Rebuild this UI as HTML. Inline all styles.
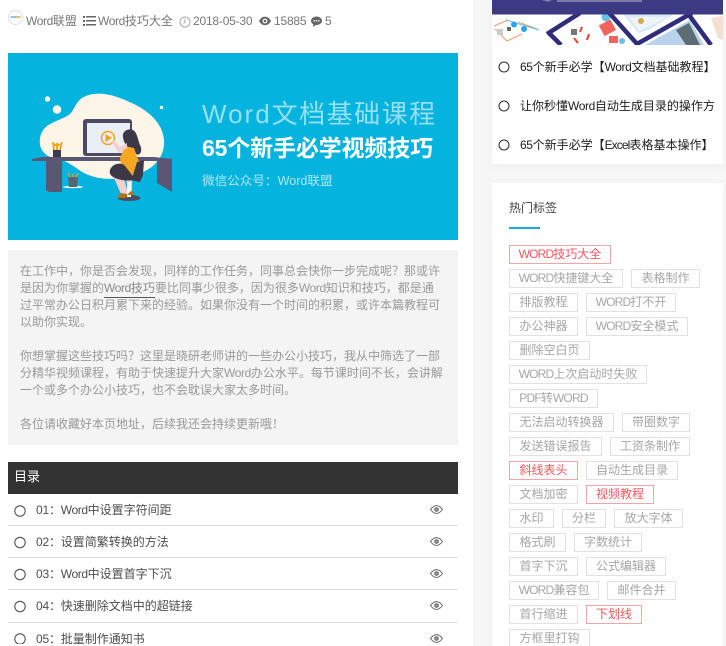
<!DOCTYPE html>
<html lang="zh">
<head>
<meta charset="utf-8">
<style>
*{box-sizing:border-box;margin:0;padding:0}
html,body{width:726px;height:646px;overflow:hidden;background:#f7f7f7}
body{position:relative;font-family:"Liberation Sans","Noto Sans CJK SC",sans-serif;font-size:12px}
.a{position:absolute;white-space:nowrap}
#left{position:absolute;left:0;top:0;width:473px;height:646px;background:#fff}
i{font-style:normal}
.m{color:#777;line-height:16px;top:13px}
.m i{letter-spacing:-.4px}
.p{left:20px;color:#999;line-height:17px;width:430px}
.p i{letter-spacing:-.4px}
.toc{left:36px;color:#4d4d4d;line-height:16px}
.toc i{letter-spacing:-.4px}
.toc u{text-decoration:none;letter-spacing:-.2px}
.ln{position:absolute;left:8px;width:450px;height:1px;background:#ddd}
.card{position:absolute;left:492px;width:231px;background:#fff;box-shadow:0 3px 10px rgba(0,0,0,.035)}
.s{left:520px;color:#1c1c1c;line-height:16px;width:195px;overflow:hidden}
.s i{letter-spacing:-.4px}
.t{position:absolute;height:19px;border:1px solid #e2e2e2;color:#a6a6a6;line-height:16px;text-align:center;white-space:nowrap;overflow:hidden}
.t i{letter-spacing:-.8px}
.r{border-color:#f5a5a8;color:#f9565c}
svg{position:absolute;display:block}
</style>
</head>
<body>
<div id="left"></div>

<!-- meta -->
<svg style="left:8px;top:10px" width="15" height="15" viewBox="0 0 15 15"><circle cx="7.5" cy="7.5" r="7" fill="#fff" stroke="#ddd"/><rect x="2.5" y="6" width="6" height="2" fill="#8cc8e8"/><rect x="8.5" y="6" width="4" height="2" fill="#f3c06a"/></svg>
<div class="a m" style="left:26px"><i>Word</i>联盟</div>
<svg style="left:83px;top:15px" width="13" height="12" viewBox="0 0 13 12" fill="#666"><rect x="0" y="1" width="2" height="2"/><rect x="3" y="1" width="10" height="1.5"/><rect x="0" y="5" width="2" height="2"/><rect x="3" y="5" width="10" height="1.5"/><rect x="0" y="9" width="2" height="2"/><rect x="3" y="9" width="10" height="1.5"/></svg>
<div class="a m" style="left:98px"><i>Word</i>技巧大全</div>
<svg style="left:179px;top:16px" width="12" height="12" viewBox="0 0 12 12" fill="none" stroke="#aaa"><circle cx="6" cy="6" r="5"/><path d="M6 2.8V6L4.6 7.6"/></svg>
<div class="a m" style="left:193px;letter-spacing:-.2px">2018-05-30</div>
<svg style="left:259px;top:16px" width="12" height="10" viewBox="0 0 12 10"><path d="M0 5C2 1.5 4 .8 6 .8S10 1.5 12 5C10 8.5 8 9.2 6 9.2S2 8.5 0 5Z" fill="#666"/><circle cx="6" cy="5" r="2.4" fill="#fff"/><circle cx="6" cy="5" r="1.3" fill="#666"/></svg>
<div class="a m" style="left:274px;letter-spacing:-.2px">15885</div>
<svg style="left:311px;top:16px" width="11" height="11" viewBox="0 0 11 11"><path d="M5.5 .5C8.5 .5 11 2.300 11 4.800S8.500 9 5.500 9L4.800 9 2 11 2.300 8.300C.9 7.500 0 6.300 0 4.800 0 2.300 2.500 .5 5.500 .5Z" fill="#666"/><circle cx="3.200" cy="4.800" r=".8" fill="#fff"/><circle cx="5.500" cy="4.800" r=".8" fill="#fff"/><circle cx="7.800" cy="4.800" r=".8" fill="#fff"/></svg>
<div class="a m" style="left:325px">5</div>

<!-- banner -->
<div class="a" style="left:8px;top:53px;width:450px;height:187px;background:#05b3df"></div>
<svg style="left:30px;top:90px" width="145" height="112" viewBox="0 0 145 112">
<path d="M52 8C64 1 78 3 95 10C115 18 132 30 134 50C135 65 126 78 108 84C90 90 72 91 56 84C46 79 38 70 24 68C10 65 7 52 12 42C17 32 33 30 40 24C44 20 46 12 52 8Z" fill="#fdf5e8"/>
<circle cx="17.500" cy="9" r="2.700" fill="#fdf5e8"/><circle cx="27" cy="19.500" r="4.300" fill="#fdf5e8"/><circle cx="131.500" cy="17.500" r="1.700" fill="#fdf5e8"/>
<rect x="53" y="29" width="49" height="37" rx="3" fill="#4d4a62"/><rect x="57" y="33" width="43" height="30" fill="#eaeef6"/>
<circle cx="78" cy="48" r="6.500" fill="none" stroke="#f6a11b" stroke-width="1.500"/><path d="M75.500 44V52L82 48Z" fill="#f6a11b"/>
<path d="M2 69L12 67H124L142 69V71H2Z" fill="#5a5775"/>
<path d="M16 71H32V102H19L16 100Z" fill="#5a5775"/>
<path d="M127 71H142V102L127 93Z" fill="#5a5775"/>
<rect x="23" y="60" width="8" height="7" fill="#3d3a4d"/><path d="M24 60L23 52M27 60V53M30 60L32 52M27 56L24 54M27 56L30 54" stroke="#f6a11b" stroke-width="1.800" fill="none"/>
<ellipse cx="43" cy="97" rx="10" ry="1.300" fill="#e8f5f8"/><path d="M38 87H48L47 97H39Z" fill="#5c6472"/><path d="M40 87L38 83M43 87V84M46 87L48 83" stroke="#f6a11b" stroke-width="1.300"/>
<path d="M84 88L94 88L98 104H91ZM96 88L102 88L102 102L98 102Z" fill="#f8cdd0"/>
<ellipse cx="99" cy="108" rx="11.500" ry="3" fill="#4d4a62"/><rect x="97" y="92" width="4" height="15" fill="#fdf5e8"/>
<path d="M87 108L91 103L97 104L96 108ZM97 105L101 101L104 102L103 105Z" fill="#b07414"/>
<path d="M93 47C92 41 98 38 103 40C107 42 108 50 110 55C113 60 110 68 105 63C98 57 94 55 93 47Z" fill="#3d3848"/>
<path d="M95 56L104 58L109 72L103 85L92 80L90 68Z" fill="#f6a722"/>
<path d="M97 58L89 63L82 53L84 50L90 57L97 53Z" fill="#f8cdd0"/>
<path d="M80 80C82 74 90 72 94 75C98 79 102 86 106 89C98 92 90 90 85 88C81 86 79 84 80 80Z" fill="#3d3848"/>
<path d="M114 70L113 85L110 92L100 90L103 85L107 72Z" fill="#3d3848"/>
</svg>
<div class="a" style="left:202px;top:97px;font-size:26px;line-height:34px;color:#fff;opacity:.58;letter-spacing:1.500px;font-weight:400"><i style="letter-spacing:2px">Word</i>文档基础课程</div>
<div class="a" style="left:202px;top:132px;font-size:23px;line-height:32px;color:#fff;font-weight:700;letter-spacing:-.15px">65个新手必学视频技巧</div>
<div class="a" style="left:202px;top:172px;font-size:12.600px;line-height:18px;color:#fff;opacity:.68">微信公众号：Word联盟</div>

<!-- intro -->
<div class="a" style="left:8px;top:250px;width:450px;height:195px;background:#f4f4f4"></div>
<div class="a p" style="top:263px">在工作中，你是否会发现，同样的工作任务，同事总会快你一步完成呢？那或许</div>
<div class="a p" style="top:280px">是因为你掌握的<i style="color:#888">Word</i><span style="color:#888">技巧</span>要比同事少很多，因为很多<i>Word</i>知识和技巧，都是通</div>
<div class="a" style="left:104px;top:297px;width:51px;height:1px;background:#555"></div>
<div class="a p" style="top:297px">过平常办公日积月累下来的经验。如果你没有一个时间的积累，或许本篇教程可</div>
<div class="a p" style="top:314px">以助你实现。</div>
<div class="a p" style="top:348px">你想掌握这些技巧吗？这里是晓研老师讲的一些办公小技巧，我从中筛选了一部</div>
<div class="a p" style="top:365px">分精华视频课程，有助于快速提升大家<i>Word</i>办公水平。每节课时间不长，会讲解</div>
<div class="a p" style="top:382px">一个或多个办公小技巧，也不会耽误大家太多时间。</div>
<div class="a p" style="top:416px">各位请收藏好本页地址，后续我还会持续更新哦！</div>

<!-- toc -->
<div class="a" style="left:8px;top:462px;width:450px;height:32px;background:#333;color:#fff;font-size:13px;line-height:30px;padding-left:6px">目录</div>
<svg style="left:14px;top:504px" width="12" height="140" viewBox="0 0 12 140" fill="none" stroke="#555" stroke-width="1.100"><circle cx="6" cy="7" r="5.200"/><circle cx="6" cy="38.500" r="5.200"/><circle cx="6" cy="70.500" r="5.200"/><circle cx="6" cy="102.500" r="5.200"/><circle cx="6" cy="135" r="5.200"/></svg>
<div class="a toc" style="top:502px"><u>01：</u><i>Word</i>中设置字符间距</div>
<div class="a toc" style="top:534px"><u>02：</u>设置简繁转换的方法</div>
<div class="a toc" style="top:566px"><u>03：</u><i>Word</i>中设置首字下沉</div>
<div class="a toc" style="top:598px"><u>04：</u>快速删除文档中的超链接</div>
<div class="a toc" style="top:631px"><u>05：</u>批量制作通知书</div>
<div class="ln" style="top:525px"></div><div class="ln" style="top:557px"></div><div class="ln" style="top:589px"></div><div class="ln" style="top:622px"></div>
<svg style="left:430px;top:505px" width="13" height="138" viewBox="0 0 13 138" fill="none" stroke="#666">
<g><path d="M.5 4.500C3 1.200 5 .6 6.500 .6S10 1.200 12.500 4.500C10 7.800 8 8.400 6.500 8.400S3 7.800 .5 4.500Z"/><circle cx="6.500" cy="4.500" r="1.800" fill="#999"/></g>
<g transform="translate(0,32)"><path d="M.5 4.500C3 1.200 5 .6 6.500 .6S10 1.200 12.500 4.500C10 7.800 8 8.400 6.500 8.400S3 7.800 .5 4.500Z"/><circle cx="6.500" cy="4.500" r="1.800" fill="#999"/></g>
<g transform="translate(0,64)"><path d="M.5 4.500C3 1.200 5 .6 6.500 .6S10 1.200 12.500 4.500C10 7.800 8 8.400 6.500 8.400S3 7.800 .5 4.500Z"/><circle cx="6.500" cy="4.500" r="1.800" fill="#999"/></g>
<g transform="translate(0,96)"><path d="M.5 4.500C3 1.200 5 .6 6.500 .6S10 1.200 12.500 4.500C10 7.800 8 8.400 6.500 8.400S3 7.800 .5 4.500Z"/><circle cx="6.500" cy="4.500" r="1.800" fill="#999"/></g>
<g transform="translate(0,129)"><path d="M.5 4.500C3 1.200 5 .6 6.500 .6S10 1.200 12.500 4.500C10 7.800 8 8.400 6.500 8.400S3 7.800 .5 4.500Z"/><circle cx="6.500" cy="4.500" r="1.800" fill="#999"/></g>
</svg>

<!-- sidebar card 1 -->
<div class="card" style="top:0;height:164px"></div>
<svg style="left:492px;top:0" width="231" height="45" viewBox="0 0 231 45">
<rect width="231" height="45" fill="#fff"/>
<path d="M131 14H182L157 30 146 33Z" fill="#d9e9f7"/>
<path d="M137 17H176L152 29 147 31Z" fill="#eef4fa"/>
<path d="M153 45L198 20 212 45Z" fill="#b9d3ec"/>
<path d="M184 30L197 23 208 45H194Z" fill="#5d6d72"/>
<circle cx="149" cy="21" r="3" fill="#d9a84a"/>
<path d="M2 26L16 20M3 29L15 41M15 41L30 34M26 22L45 29" stroke="#ef9a6d" stroke-width="1" fill="none"/>
<path d="M14 20L47 30" stroke="#5bbdea" stroke-width="1"/>
<circle cx="22" cy="24.500" r="3" fill="#2ba6e8"/><circle cx="32" cy="29" r="3" fill="#2ba6e8"/>
<rect x="5" y="29" width="6" height="6" fill="#ccc"/><rect x="15" y="27" width="4" height="4" fill="#666"/>
<rect x="109" y="22" width="13" height="12" fill="#f0655c" transform="rotate(-28 115 28)"/>
<circle cx="114" cy="17" r="4.500" fill="#66c1e8"/><rect x="117" y="36" width="9" height="7" fill="#f0655c"/><circle cx="130" cy="41" r="3" fill="#66c1e8"/>
<rect x="79" y="29" width="6" height="6" fill="#777"/>
<path d="M82 38L86 43M90 27L88 32M97 34L95 40" stroke="#ea4b3f" stroke-width="2.200"/>
<path d="M219 18L231 16V40L226 38Z" fill="#f5dfd0"/>
<path d="M55 34L88 13M145 44L200 13M111 6L146 45M197 15L219 45M57 33L69 45" stroke="#2f2c7c" stroke-width="4.500" fill="none"/>
<path d="M0 0H231V14.500H0Z" fill="#3c3a83"/>
<path d="M50 0H60L56 2ZM65 0H150V2H65Z" fill="#7d7ba8"/>
</svg>
<svg style="left:498px;top:60px" width="12" height="92" viewBox="0 0 12 92" fill="none" stroke="#333" stroke-width="1.100"><circle cx="6" cy="7" r="5"/><circle cx="6" cy="46" r="5"/><circle cx="6" cy="85" r="5"/></svg>
<div class="a s" style="top:59px"><i>65</i>个新手必学【<i>Word</i>文档基础教程】</div>
<div class="a s" style="top:98px">让你秒懂<i>Word</i>自动生成目录的操作方法</div>
<div class="a s" style="top:137px"><i>65</i>个新手必学【<i style="letter-spacing:-.9px">Excel</i>表格基本操作】</div>

<!-- tag card -->
<div class="card" style="top:183px;height:470px"></div>
<div class="a" style="left:509px;top:200px;color:#444;line-height:16px">热门标签</div>
<div class="a" style="left:509px;top:227px;width:31px;height:2px;background:#17a8ef"></div>

<div class="t r" style="left:509px;top:245px;width:102px"><i>WORD</i>技巧大全</div>
<div class="t" style="left:509px;top:269px;width:114px"><i>WORD</i>快捷键大全</div>
<div class="t" style="left:631px;top:269px;width:69px">表格制作</div>
<div class="t" style="left:509px;top:293px;width:69px">排版教程</div>
<div class="t" style="left:586px;top:293px;width:90px"><i>WORD</i>打不开</div>
<div class="t" style="left:509px;top:317px;width:69px">办公神器</div>
<div class="t" style="left:586px;top:317px;width:102px"><i>WORD</i>安全模式</div>
<div class="t" style="left:509px;top:341px;width:81px">删除空白页</div>
<div class="t" style="left:509px;top:365px;width:138px"><i>WORD</i>上次启动时失败</div>
<div class="t" style="left:509px;top:389px;width:89px"><i>PDF</i>转<i>WORD</i></div>
<div class="t" style="left:509px;top:413px;width:105px">无法启动转换器</div>
<div class="t" style="left:622px;top:413px;width:68px">带圈数字</div>
<div class="t" style="left:509px;top:437px;width:93px">发送错误报告</div>
<div class="t" style="left:610px;top:437px;width:80px">工资条制作</div>
<div class="t r" style="left:509px;top:461px;width:69px">斜线表头</div>
<div class="t" style="left:586px;top:461px;width:92px">自动生成目录</div>
<div class="t" style="left:509px;top:485px;width:69px">文档加密</div>
<div class="t r" style="left:586px;top:485px;width:68px">视频教程</div>
<div class="t" style="left:509px;top:509px;width:45px">水印</div>
<div class="t" style="left:562px;top:509px;width:44px">分栏</div>
<div class="t" style="left:614px;top:509px;width:69px">放大字体</div>
<div class="t" style="left:509px;top:533px;width:57px">格式刷</div>
<div class="t" style="left:574px;top:533px;width:68px">字数统计</div>
<div class="t" style="left:509px;top:557px;width:69px">首字下沉</div>
<div class="t" style="left:586px;top:557px;width:80px">公式编辑器</div>
<div class="t" style="left:509px;top:581px;width:90px"><i>WORD</i>兼容包</div>
<div class="t" style="left:607px;top:581px;width:69px">邮件合并</div>
<div class="t" style="left:509px;top:605px;width:69px">首行缩进</div>
<div class="t r" style="left:586px;top:605px;width:56px">下划线</div>
<div class="t" style="left:509px;top:629px;width:81px">方框里打钩</div>
</body>
</html>
